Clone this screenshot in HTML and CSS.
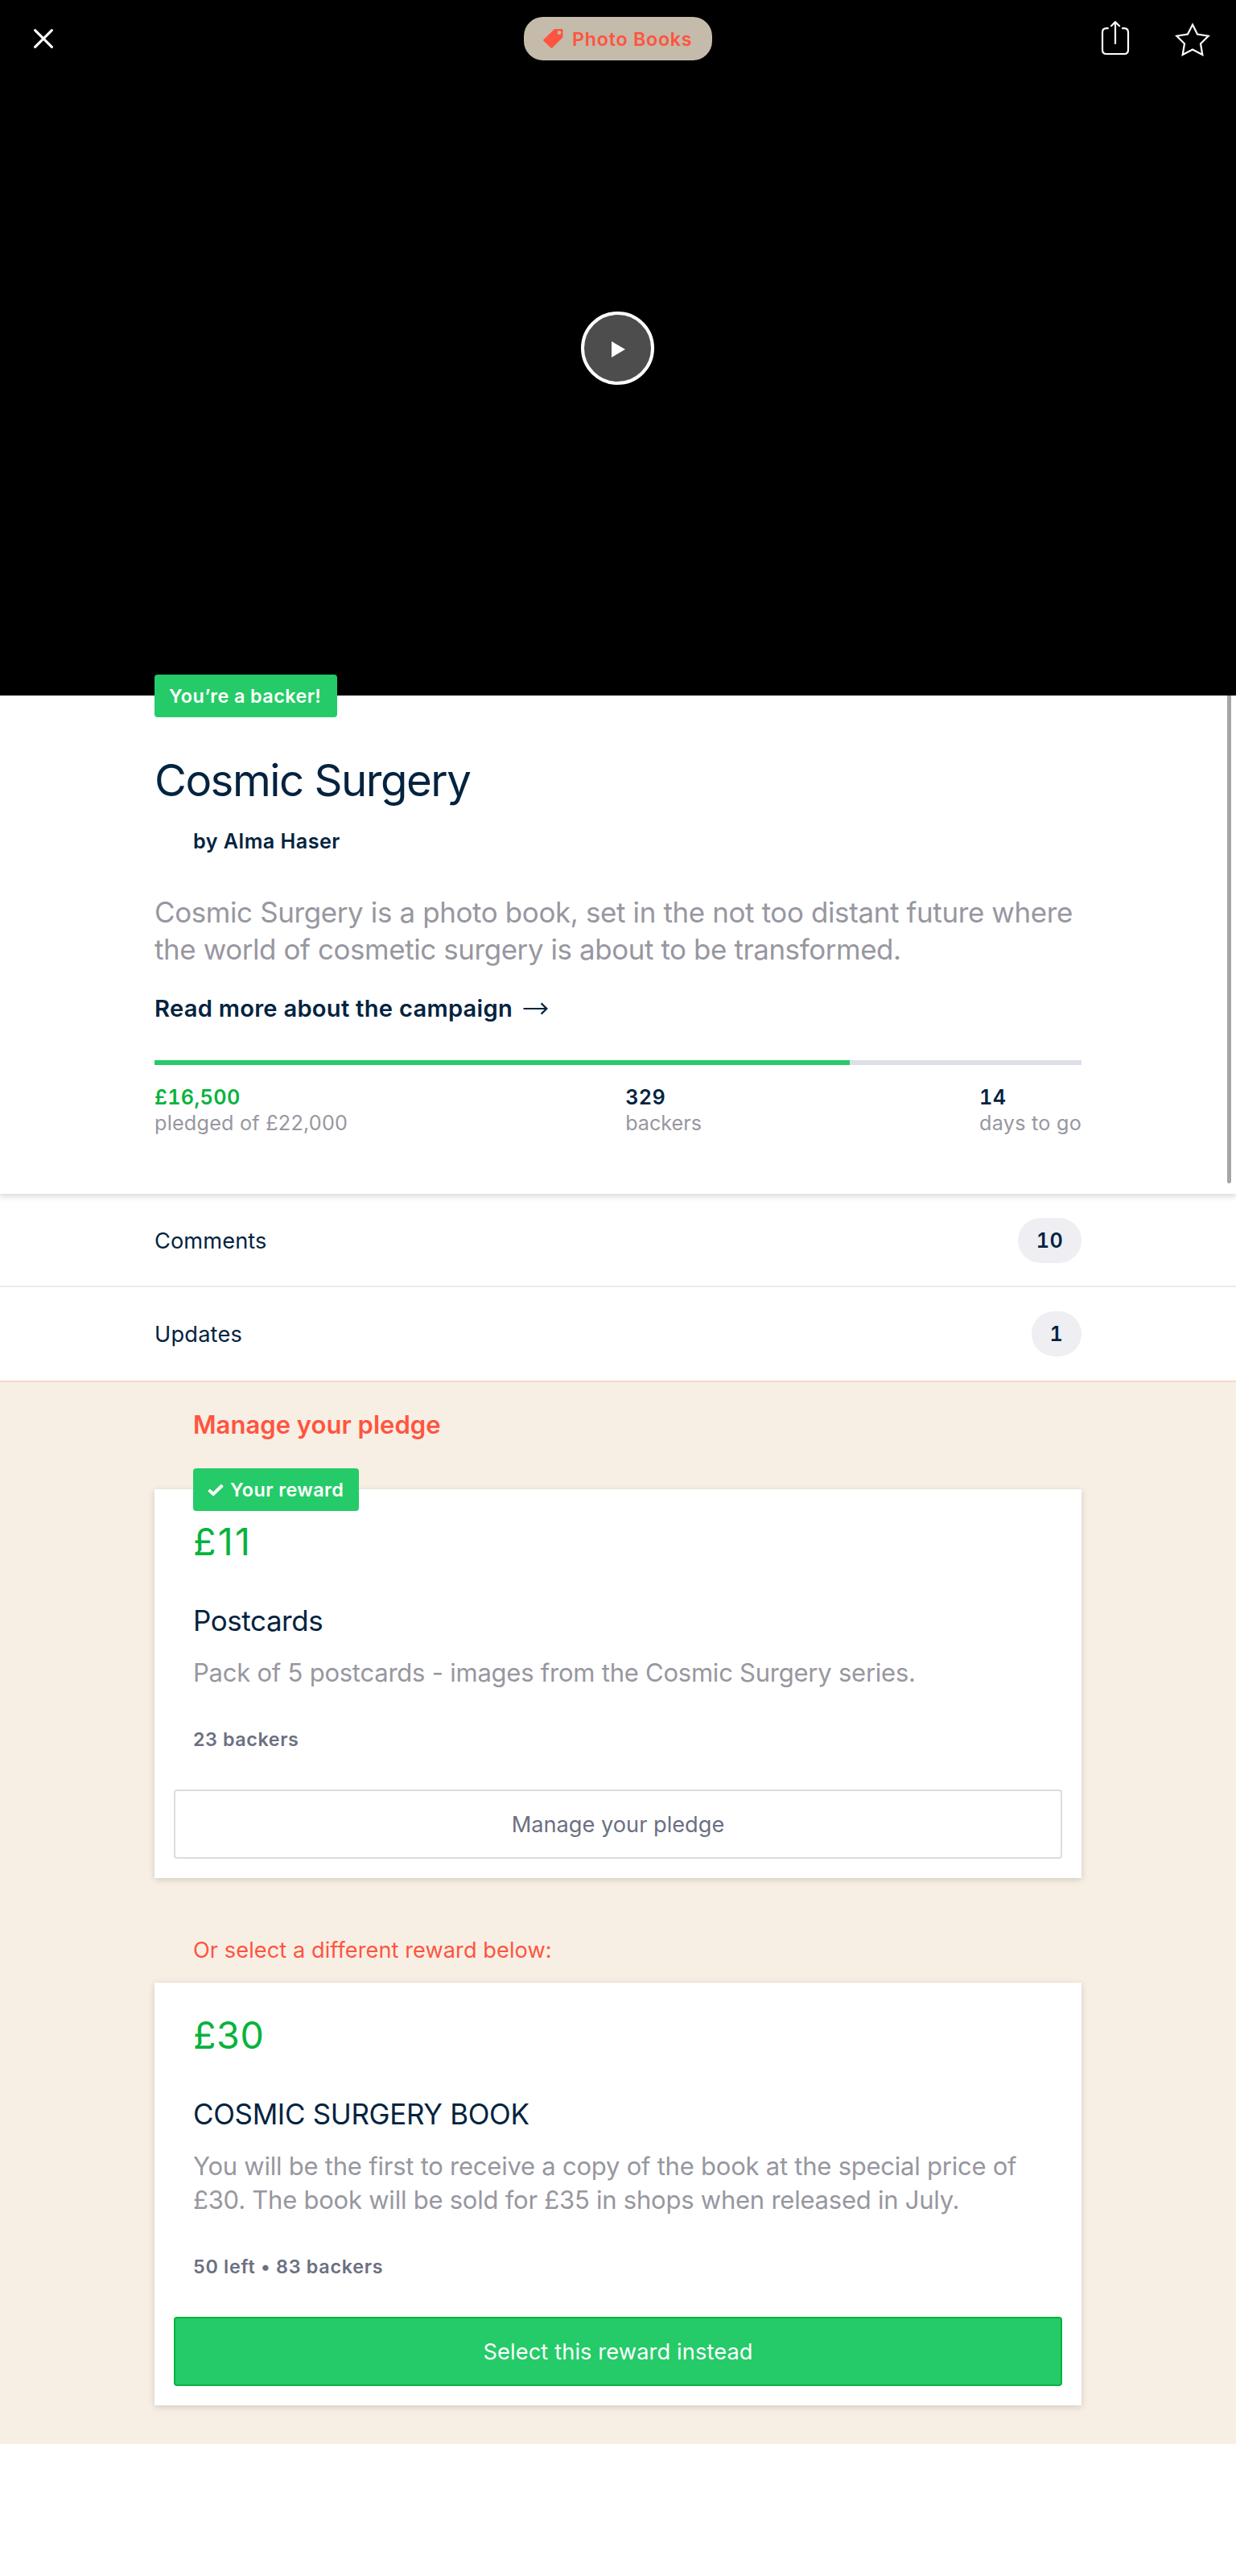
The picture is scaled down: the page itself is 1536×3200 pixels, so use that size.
FILE: index.html
```html
<!DOCTYPE html>
<html lang="en">
<head>
<meta charset="utf-8">
<title>Cosmic Surgery</title>
<link rel="stylesheet" href="styles.css">
</head>
<body>
<header class="hero">
  <nav class="nav">
    <a class="close" aria-label="Close">
      <svg width="24" height="24" viewBox="0 0 24 24"><path d="M1.6 1.6 22.4 22.4M22.4 1.6 1.6 22.4" stroke="#fff" stroke-width="3" stroke-linecap="round"/></svg>
    </a>
    <a class="category">
      <svg width="25" height="24" viewBox="0 0 25 24"><path fill="#ff5440" fill-rule="evenodd" d="M14 0H23.4Q24.4 0 24.4 1V10.4L11.2 23.6Q10.4 24.3 9.6 23.6L.5 14.7Q-.2 14 .5 13.3ZM20 2.3a2.4 2.4 0 1 0 0 4.8a2.4 2.4 0 1 0 0-4.8Z"/></svg>
      <span>Photo Books</span>
    </a>
    <div class="actions">
      <svg width="36" height="44" viewBox="0 0 36 44" fill="none" stroke="#fff" stroke-width="2.2" stroke-linecap="round" stroke-linejoin="round"><path d="M8.8 9.2H7Q2 9.2 2 14.2V36Q2 41 7 41H29Q34 41 34 36V14.2Q34 9.2 29 9.2H27"/><path d="M18 28V1.6M13 6.2 18 1.2 23 6.2"/></svg>
      <svg width="44" height="44" viewBox="0 0 44 44" fill="none" stroke="#fff" stroke-width="2.2"><path d="M22 4.6 28 16.5 41.7 18.7 32 28.3 34.3 42 22 35.6 9.7 42 12 28.3 2.3 18.7 16 16.5Z"/></svg>
    </div>
  </nav>
  <a class="play" aria-label="Play">
    <svg width="17" height="20" viewBox="0 0 17 20"><path d="M0 0 17 10 0 20Z" fill="#fff"/></svg>
  </a>
</header>

<section class="project">
  <div class="scrollbar"></div>
  <span class="tag tag-backer">You’re a backer!</span>
  <h1>Cosmic Surgery</h1>
  <p class="creator">by Alma Haser</p>
  <p class="blurb">Cosmic Surgery is a photo book, set in the not too distant future where<br><span class="blurb-end">the world of cosmetic surgery is about to be transformed.</span></p>
  <a class="read-more">
    <span>Read more about the campaign</span>
    <svg width="31" height="16" viewBox="0 0 31 16" fill="none" stroke="#03233f" stroke-width="2.2"><path d="M.5 8H29.5M22.6 1.4 29.4 8 22.6 14.6"/></svg>
  </a>
  <div class="progress"><div class="progress-fill" style="width:75%"></div></div>
  <div class="stats">
    <div><strong class="raised">£16,500</strong><span class="goal">pledged of £22,000</span></div>
    <div><strong>329</strong><span>backers</span></div>
    <div><strong>14</strong><span class="days">days to go</span></div>
  </div>
</section>

<section class="links">
  <a class="row"><span class="comments">Comments</span><b class="count">10</b></a>
  <a class="row"><span class="updates">Updates</span><b class="count">1</b></a>
</section>

<section class="rewards">
  <h2>Manage your pledge</h2>
  <article class="card">
    <span class="tag tag-reward">
      <svg width="20" height="16" viewBox="0 0 20 16"><path d="M1.6 7.9 7.1 13 18.4 2" fill="none" stroke="#fff" stroke-width="4"/></svg>
      <span>Your reward</span>
    </span>
    <div class="details">
      <div class="price eleven">£11</div>
      <h3 class="postcards">Postcards</h3>
      <p class="description">Pack of 5 postcards - images from the Cosmic Surgery series.</p>
      <p class="meta">23 backers</p>
    </div>
    <a class="button">Manage your pledge</a>
  </article>
  <p class="other">Or select a different reward below:</p>
  <article class="card">
    <div class="details">
      <div class="price">£30</div>
      <h3>COSMIC SURGERY BOOK</h3>
      <p class="description">You will be the first to receive a copy of the book at the special price of<br>£30. The book will be sold for £35 in shops when released in July.</p>
      <p class="meta left">50 left • 83 backers</p>
    </div>
    <a class="button primary">Select this reward instead</a>
  </article>
</section>
</body>
</html>
```
FILE: styles.css
```css
* { box-sizing: border-box; }

body {
  margin: 0;
  background: #fff;
  color: #03233f;
  font-family: Inter, "Liberation Sans", sans-serif;
}

h1, h2, h3, p { margin: 0; font-weight: 400; }
svg { display: block; flex: none; }

.hero {
  position: relative;
  height: 864px;
  padding-top: 21px;
  background: #000;
}

.nav {
  display: grid;
  grid-template-columns: 609px 234px 1fr;
  align-items: center;
  height: 54px;
  padding: 0 32px 0 42px;
}

.category {
  display: flex;
  align-items: center;
  gap: 11px;
  height: 54px;
  padding-left: 24px;
  border-radius: 24px;
  background: #c4bbaa;
  color: #ff5440;
  font-size: 23.3px;
  font-weight: 600;
  letter-spacing: .73px;
  white-space: nowrap;
}

.actions { display: flex; justify-content: flex-end; gap: 56px; }

.play {
  position: absolute;
  top: 387px;
  left: calc(50% - 46px);
  display: flex;
  align-items: center;
  justify-content: center;
  width: 91px;
  height: 91px;
  padding: 3px 0 0 2px;
  border: 4px solid #fff;
  border-radius: 50%;
  background: #4d4d4d;
}

.project {
  position: relative;
  z-index: 1;
  display: flex;
  flex-direction: column;
  height: 619px;
  padding: 0 192px;
  background: #fff;
  box-shadow: 0 2px 8px 1px rgba(0, 0, 0, .16);
  clip-path: inset(-30px 0 -20px 0);
}

.scrollbar {
  position: absolute;
  top: 0;
  right: 6px;
  width: 5px;
  height: 606px;
  border-radius: 0 0 3px 3px;
  background: #a6a6a6;
}

.tag {
  display: flex;
  align-items: center;
  gap: 8px;
  height: 53px;
  padding-left: 18px;
  border-radius: 4px;
  background: #25cb68;
  color: #fff;
  font-size: 23.3px;
  font-weight: 600;
  letter-spacing: .46px;
  white-space: nowrap;
}
.tag-backer { width: 227px; margin-top: -26px; }
.tag-reward { position: absolute; top: -26px; left: 48px; width: 206px; }

h1 { margin-top: 45px; font-size: 54.6px; line-height: 66px; letter-spacing: -1.5px; }
.creator { margin-top: 27px; padding-left: 48px; font-size: 25.2px; line-height: 32px; font-weight: 600; letter-spacing: .46px; }
.blurb { margin-top: 49px; color: #9797a0; font-size: 34.9px; line-height: 46px; letter-spacing: -.345px; white-space: nowrap; }
.blurb-end { letter-spacing: -.39px; }

.read-more {
  display: flex;
  align-items: center;
  gap: 13px;
  margin-top: 33px;
  font-size: 29.1px;
  line-height: 36px;
  font-weight: 600;
  letter-spacing: .28px;
}

.progress { height: 6px; margin-top: 46px; background: #dcdee8; }
.progress-fill { height: 6px; background: #25cb68; }

.stats {
  display: flex;
  justify-content: space-between;
  margin-top: 24px;
  color: #9797a0;
  font-size: 25.2px;
  line-height: 32px;
}
.stats div { display: flex; flex-direction: column; }
.stats strong { color: #03233f; font-weight: 600; font-feature-settings: "tnum"; letter-spacing: .35px; }
.stats .raised { color: #06b33c; }
.goal { letter-spacing: .22px; }
.days { letter-spacing: .25px; }

.row {
  display: flex;
  align-items: center;
  justify-content: space-between;
  height: 116px;
  padding: 2px 192px 0;
  border-bottom: 2px solid #ebebec;
  font-size: 27.2px;
}
.row + .row { height: 118px; padding-top: 0; border-color: #f6d6cb; }
.comments { letter-spacing: .1px; }
.updates { letter-spacing: .2px; }
.count {
  height: 56px;
  padding: 0 23px 0 22.5px;
  border-radius: 28px;
  background: #eeeef3;
  font-size: 25.2px;
  font-weight: 600;
  line-height: 56px;
  letter-spacing: .3px;
  font-feature-settings: "tnum";
}

.rewards { height: 1319px; padding: 33px 192px 48px; background: #f7efe4; }
.rewards h2 { padding-left: 48px; color: #ff5440; font-size: 31px; line-height: 40px; font-weight: 600; letter-spacing: .02px; }

.card {
  position: relative;
  padding: 37px 24px 24px;
  background: #fff;
  box-shadow: 0 2px 8px rgba(0, 0, 0, .16);
}
h2 + .card { margin-top: 60px; }
.details { padding-left: 24px; }
.price { color: #06b33c; font-size: 46.6px; line-height: 56px; letter-spacing: .6px; }
.eleven { letter-spacing: 2.3px; }
h3 { margin-top: 48px; font-size: 34.9px; line-height: 44px; letter-spacing: -.3px; }
.postcards { letter-spacing: -.38px; }
.description { margin-top: 22px; color: #9797a0; font-size: 31px; line-height: 42px; letter-spacing: -.235px; white-space: nowrap; }
.meta { margin-top: 47px; color: #6b7082; font-size: 23.3px; line-height: 30px; font-weight: 600; letter-spacing: .6px; }
.left { letter-spacing: .74px; }

.button {
  display: flex;
  align-items: center;
  justify-content: center;
  height: 86px;
  margin-top: 47px;
  border: 2px solid #dcdcde;
  border-radius: 4px;
  color: #6b7082;
  font-size: 27.2px;
}
.primary { border-color: #06b33c; background: #25cb68; color: #fff; letter-spacing: .13px; }

.other { margin: 73px 0 23px 48px; color: #ff5440; font-size: 27.2px; line-height: 34px; letter-spacing: .06px; }
```
